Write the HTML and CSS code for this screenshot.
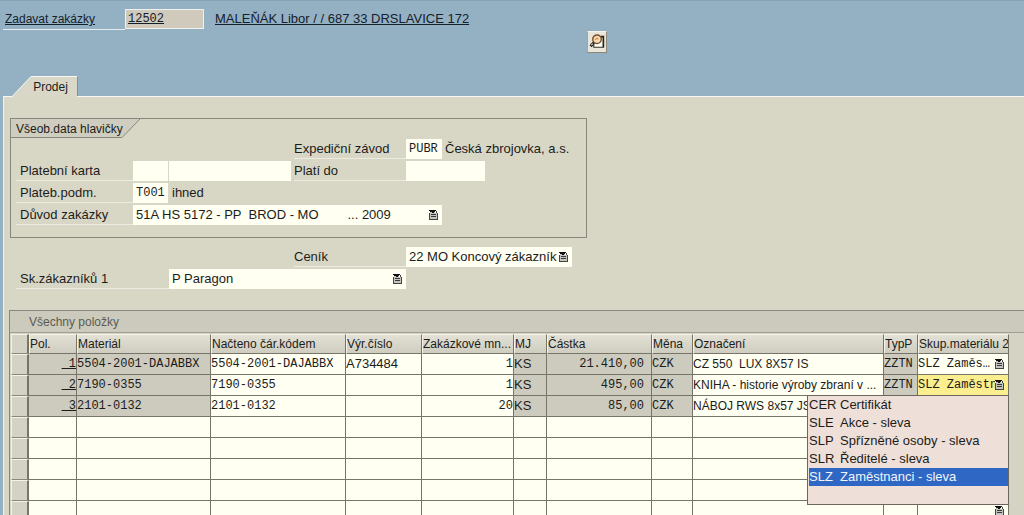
FILE: index.html
```html
<!DOCTYPE html>
<html lang="cs">
<head>
<meta charset="utf-8">
<title>Zakázka – Prodej</title>
<link rel="stylesheet" href="styles.css">
</head>
<body>
<svg class="defs" aria-hidden="true">
  <symbol id="list" viewBox="0 0 9 10">
    <path d="M1 1h5v2h2v6H1z" fill="#c4c4c0"/>
    <path d="M0 3h1v7H0zM1 9h8v1H1zM8 3h1v6H8zM7 1h1v2H7z" fill="#44443f"/>
    <path d="M0 0h7v1H6v1H5v1H3V2H1V1H0z" fill="#111"/>
    <path d="M2 4h5v1H2zM2 6h5v1H2z" fill="#3a3a38"/>
  </symbol>
</svg>
<header class="order">
  <label class="order-label" for="orderer">Zadavat zakázky</label>
  <input class="order-input mono" id="orderer" value="12502" readonly>
  <a class="order-link" href="#">MALEŇÁK Libor / / 687 33 DRSLAVICE 172</a>
</header>
<div class="toolbar">
  <button class="search" aria-label="Detail partnera">
    <svg width="16" height="16" viewBox="0 0 15 15">
      <path d="M5 2.500h8.500v10h-9V9" fill="#fffef4" stroke="#37332b"/>
      <path d="M11 2.500h2.500v10" fill="none" stroke="#222" stroke-width="1.500"/>
      <circle cx="7.500" cy="5" r="4" fill="#f6dcb4" stroke="#7c4a25" stroke-width="1.300"/>
      <path d="M5.500 5.500l2-1.500 1.500 1" fill="none" stroke="#d48a48"/>
      <path d="M4.500 8L1.500 11.500" stroke="#222" stroke-width="2.600"/>
      <path d="M3.500 9L2.200 10.500" stroke="#ddd"/>
    </svg>
  </button>
</div>
<nav class="tabs">
  <button class="tab">
    <svg class="tab-shape" width="66" height="21" viewBox="0 0 66 21"><path d="M0 21L19 .5H65V21z" fill="#d9d8c8"/><path d="M0 20.500L19 .5H65" fill="none" stroke="#f8f8f2"/><path d="M65.500 1V20" stroke="#88918f"/></svg>
    <span class="tab-text">Prodej</span>
  </button>
</nav>
<main class="panel">
  <fieldset class="group">
    <legend class="group-title">
      <svg class="group-shape" width="130" height="19" viewBox="0 0 130 19"><path d="M0 0H129L111 18.500H0z" fill="#cfcdbf"/><path d="M129 0L111 18.500H0" fill="none" stroke="#89877b"/></svg>
      <span class="group-text">Všeob.data hlavičky</span>
    </legend>
    <div class="form">
      <label class="lab c4" for="plant">Expediční závod</label>
      <input class="field mono c5" id="plant" value="PUBR">
      <span class="note c6">Česká zbrojovka, a.s.</span>

      <label class="lab c1" for="card">Platební karta</label>
      <input class="field c2" id="card">
      <input class="field card-no" aria-label="Číslo karty">
      <label class="lab c4" for="valid">Platí do</label>
      <input class="field valid" id="valid">

      <label class="lab c1" for="terms">Plateb.podm.</label>
      <input class="field mono c2" id="terms" value="T001">
      <span class="note c3">ihned</span>

      <label class="lab c1" for="reason">Důvod zakázky</label>
      <div class="pick reason">
        <select class="field" id="reason"><option>51A HS 5172 - PP &nbsp;BROD - MO &nbsp; &nbsp; &nbsp; &nbsp;... 2009</option></select>
        <svg class="pick-icon" width="9" height="10"><use href="#list"/></svg>
      </div>
    </div>
  </fieldset>
  <div class="form extra">
    <label class="lab c4" for="price">Ceník</label>
    <div class="pick price">
      <select class="field" id="price"><option>22 MO Koncový zákazník</option></select>
      <svg class="pick-icon" width="9" height="10"><use href="#list"/></svg>
    </div>
    <label class="lab c12" for="cust">Sk.zákazníků 1</label>
    <div class="pick cust">
      <select class="field" id="cust"><option>P Paragon</option></select>
      <svg class="pick-icon" width="9" height="10"><use href="#list"/></svg>
    </div>
  </div>
  <section class="items">
    <h2 class="items-title">Všechny položky</h2>
    <table class="grid">
      <colgroup>
        <col class="w-sel"><col class="w-pos"><col class="w-mat"><col class="w-bar"><col class="w-ser"><col class="w-qty"><col class="w-unit"><col class="w-amt"><col class="w-cur"><col><col class="w-type"><col class="w-grp">
      </colgroup>
      <thead>
        <tr><th class="sel"></th><th>Pol.</th><th>Materiál</th><th>Načteno čár.kódem</th><th>Výr.číslo</th><th>Zakázkové mn...</th><th>MJ</th><th>Částka</th><th>Měna</th><th>Označení</th><th>TypP</th><th>Skup.materiálu 2</th></tr>
      </thead>
      <tbody>
        <tr>
          <td class="sel"></td><td class="off num mono"><a class="pos" href="#">&nbsp;1</a></td><td class="off mono">5504-2001-DAJABBX</td>
          <td><input class="cell mono" aria-label="Čár. kód 1" value="5504-2001-DAJABBX"></td><td><input class="cell" aria-label="Výr. číslo 1" value="A734484"></td><td><input class="cell mono num" aria-label="Množství 1" value="1"></td>
          <td class="off">KS</td><td class="off mono amt">21.410,00</td><td class="off mono">CZK</td><td><input class="cell desc" aria-label="Označení 1" value="CZ 550  LUX 8X57 IS"></td><td class="off mono">ZZTN</td>
          <td><div class="pick"><select class="cell mono" aria-label="Skupina 1"><option>SLZ Zaměs…</option></select><svg class="pick-icon" width="9" height="10"><use href="#list"/></svg></div></td>
        </tr>
        <tr>
          <td class="sel"></td><td class="off num mono"><a class="pos" href="#">&nbsp;2</a></td><td class="off mono">7190-0355</td>
          <td><input class="cell mono" aria-label="Čár. kód 2" value="7190-0355"></td><td></td><td><input class="cell mono num" aria-label="Množství 2" value="1"></td>
          <td class="off">KS</td><td class="off mono amt">495,00</td><td class="off mono">CZK</td><td><input class="cell desc" aria-label="Označení 2" value="KNIHA - historie výroby zbraní v ..."></td><td class="off mono">ZZTN</td>
          <td class="active"><div class="pick"><select class="cell mono" aria-label="Skupina 2"><option>SLZ Zaměstnanci</option></select><svg class="pick-icon" width="9" height="10"><use href="#list"/></svg>
            <ul class="menu" role="listbox" aria-label="Skup.materiálu 2">
              <li class="opt" role="option"><span class="code">CER</span>Certifikát</li>
              <li class="opt" role="option"><span class="code">SLE</span>Akce - sleva</li>
              <li class="opt" role="option"><span class="code">SLP</span>Spřízněné osoby - sleva</li>
              <li class="opt" role="option"><span class="code">SLR</span>Ředitelé - sleva</li>
              <li class="opt chosen" role="option" aria-selected="true"><span class="code">SLZ</span>Zaměstnanci - sleva</li>
              <li class="opt" role="option"></li>
            </ul></div>
          </td>
        </tr>
        <tr>
          <td class="sel"></td><td class="off num mono"><a class="pos" href="#">&nbsp;3</a></td><td class="off mono">2101-0132</td>
          <td><input class="cell mono" aria-label="Čár. kód 3" value="2101-0132"></td><td></td><td><input class="cell mono num" aria-label="Množství 3" value="20"></td>
          <td class="off">KS</td><td class="off mono amt">85,00</td><td class="off mono">CZK</td><td><input class="cell desc" aria-label="Označení 3" value="NÁBOJ RWS 8x57 JS"></td><td class="off mono"></td><td></td>
        </tr>
        <tr><td class="sel"></td><td></td><td></td><td></td><td></td><td></td><td></td><td></td><td></td><td></td><td></td><td></td></tr>
        <tr><td class="sel"></td><td></td><td></td><td></td><td></td><td></td><td></td><td></td><td></td><td></td><td></td><td></td></tr>
        <tr><td class="sel"></td><td></td><td></td><td></td><td></td><td></td><td></td><td></td><td></td><td></td><td></td><td></td></tr>
        <tr><td class="sel"></td><td></td><td></td><td></td><td></td><td></td><td></td><td></td><td></td><td></td><td></td><td></td></tr>
        <tr><td class="sel"></td><td></td><td></td><td></td><td></td><td></td><td></td><td></td><td></td><td></td><td></td><td><div class="pick"><select class="cell mono" aria-label="Skupina 8"><option></option></select><svg class="pick-icon" width="9" height="10"><use href="#list"/></svg></div></td></tr>
      </tbody>
    </table>
  </section>
</main>
</body>
</html>
```
FILE: styles.css
```css
* { box-sizing: border-box; }
body {
  margin: 0;
  height: 100vh;
  overflow: hidden;
  display: flex;
  flex-direction: column;
  background: #94b1c3;
  color: #1c1c1a;
  font: 13px/20px "Liberation Sans", Arial, sans-serif;
}
input, select, button { font: inherit; color: inherit; border: 0; border-radius: 0; margin: 0; padding: 0; }
select { appearance: none; }
.mono { font-family: "Liberation Mono", "Courier New", monospace; font-size: 12px; }
.defs { display: none; }

.order { display: flex; flex: none; padding: 8px 3px 0; border-top: 1px solid #86a2b4; font-size: 12px; color: #14202c; }
.order-label { width: 122px; padding-left: 2px; border-bottom: 1px solid #e4ecf0; text-decoration: underline; }
.order-input { width: 79px; height: 20px; padding: 0 2px; background: #cfcabb; border: 1px solid #eef1f0; text-decoration: underline; }
.order-link { margin-left: 11px; color: inherit; font-size: 13px; }
.toolbar { flex: none; height: 47px; padding: 1px 0 0 587px; }
.search { display: flex; align-items: center; justify-content: center; width: 20px; height: 22px; background: #e9e5da; border: 1px solid; border-color: #f5f3ec #8c8878 #8c8878 #aaa594; }
.tabs { flex: none; display: flex; padding-left: 12px; height: 20px; margin-top: -1px; }
.tab { position: relative; width: 66px; height: 21px; background: none; font-size: 12px; z-index: 1; }
.tab-shape { position: absolute; top: 0; left: 0; }
.tab-text { position: relative; padding-left: 11px; }

.panel { flex: 1 0 auto; margin-left: 3px; padding: 21px 0 0 5px; background: #d8d7c6; border-top: 1px solid #f8f8f2; border-left: 1px solid #f0f2ee; }
.group { position: relative; width: 577px; min-width: 0; height: 120px; margin: 0 0 0 1px; padding: 20px 0 0 5px; border: 1px solid #89877b; }
.group-title { position: absolute; top: 0; left: 0; padding: 0; }
.group-shape { display: block; }
.group-text { position: absolute; top: 0; left: 5px; font-size: 12px; white-space: nowrap; }
.form { display: grid; grid-template-columns: 117px 36px 125px 112px 36px 1fr; grid-auto-rows: 20px; row-gap: 2px; }
.extra { margin: 9px 0 0 7px; }
.lab { padding: 0 0 0 4px; border-bottom: 1px solid #edece2; }
.c4.lab { padding-left: 0; }
.c1 { grid-column: 1; }
.c12 { grid-column: 1 / 3; }
.c2 { grid-column: 2; }
.c3 { grid-column: 3; }
.c4 { grid-column: 4; }
.c5 { grid-column: 5; }
.c6 { grid-column: 6; }
.field { width: 100%; height: 20px; padding: 0 3px; background: #fffff2; }
.field.c2 { width: 35px; }
.card-no { grid-column: 3; width: 122px; }
.valid { grid-column: 5 / 7; width: 79px; }
.note { padding-left: 3px; white-space: nowrap; }
.pick { position: relative; }
.pick-icon { position: absolute; right: 4px; top: 5px; pointer-events: none; }
.reason { grid-column: 2 / 6; }
.price { grid-column: 5 / 7; width: 166px; }
.cust { grid-column: 3 / 5; }

.items { margin-top: 21px; border-top: 1px solid #89877b; border-left: 1px solid #89877b; background: #d5d3c4; }
.items-title { margin: 0 0 1px; padding-left: 19px; height: 22px; border-bottom: 1px solid #a19f92; background: #cccabc; color: #5c5b53; font-size: 12px; font-weight: normal; line-height: 22px; }
.grid { width: calc(100% - 16px); margin-left: 1px; table-layout: fixed; border-collapse: separate; border-spacing: 0; }
.w-sel { width: 18px; }
.w-pos { width: 48px; }
.w-mat { width: 134px; }
.w-bar { width: 135px; }
.w-ser { width: 76px; }
.w-qty { width: 92px; }
.w-unit { width: 33px; }
.w-amt { width: 105px; }
.w-cur { width: 41px; }
.w-type { width: 34px; }
.w-grp { width: 91px; }
.grid th { height: 20px; padding: 0; overflow: hidden; border: 1px solid; border-color: #f4f3ea #77756a #77756a #f4f3ea; background: linear-gradient(#e3e1d5, #cfcdbf); font-size: 12px; font-weight: normal; line-height: 18px; text-align: left; white-space: nowrap; }
.grid td { height: 21px; padding: 0; border-right: 1px solid #77756a; border-bottom: 1px solid #77756a; background: #fffff2; white-space: nowrap; }
.grid .off { background: #cdcbbe; }
.grid .sel { background: #d4d2c4; border: 1px solid; border-color: #f4f3ea #77756a #89877b #f4f3ea; border-right-width: 2px; }
.grid .active, .active .cell { background: #fbee8e; }
.num { text-align: right; }
.grid .amt { padding-right: 7px; text-align: right; }
.pos { color: inherit; }
.cell { display: block; width: 100%; height: 20px; background: #fffff2; text-overflow: clip; }
.desc { font-size: 12px; }
select.cell { padding-right: 13px; overflow: hidden; }

.menu { position: absolute; z-index: 2; right: -1px; top: 20px; width: 202px; margin: 0; padding: 0 0 0 1px; list-style: none; background: #eee0d8; border: 1px solid #6f6560; font-family: "Liberation Sans", Arial, sans-serif; line-height: 18px; }
.opt { display: flex; height: 18px; }
.code { width: 31px; }
.chosen { background: #2f67c4; color: #f2f5fb; }
```
